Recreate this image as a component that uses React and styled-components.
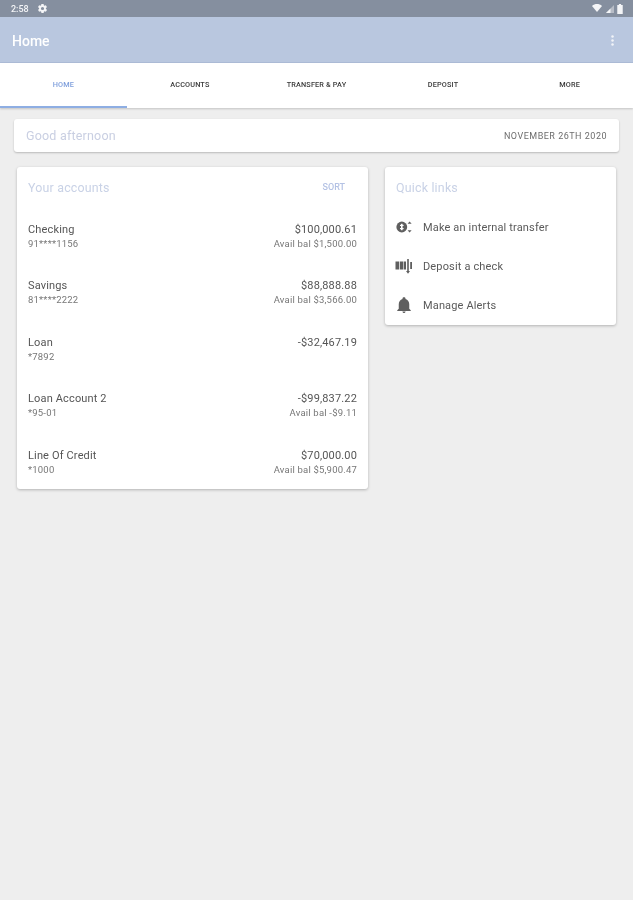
import React from "react";
import styled, { createGlobalStyle } from "styled-components";

const Global = createGlobalStyle`
  html, body { margin: 0; padding: 0; background: #eeeeee; }
  body { font-family: Roboto, "Liberation Sans", sans-serif; }
`;

const Page = styled.div`
  width: 633px;
  height: 900px;
  display: flex;
  flex-direction: column;
  background: #eeeeee;
  overflow: hidden;
  filter: blur(0.5px);
`;

const StatusBar = styled.div`
  height: 17px;
  flex: none;
  display: flex;
  align-items: center;
  justify-content: space-between;
  padding: 0 10px 0 11px;
  background: #858f9f;
  color: #f4f5f7;
  font-size: 9px;
  font-weight: 500;
`;

const StatusGroup = styled.div`
  display: flex;
  align-items: center;
  gap: ${(p) => p.$gap}px;
`;

const AppBar = styled.header`
  height: 46px;
  flex: none;
  display: flex;
  align-items: center;
  justify-content: space-between;
  padding: 2px 19px 0 12px;
  background: #b9c7df;
  color: #ffffff;
  font-size: 14px;
  font-weight: 500;
  border-bottom: 1px solid #aebdd8;
  box-sizing: border-box;
`;

const Tabs = styled.nav`
  height: 45px;
  flex: none;
  display: flex;
  background: #ffffff;
  box-shadow: 0 1px 2px rgba(0, 0, 0, 0.18);
`;

const Tab = styled.div`
  flex: 1;
  display: flex;
  align-items: center;
  justify-content: center;
  box-sizing: border-box;
  font-size: 7.3px;
  font-weight: 500;
  letter-spacing: 0.15px;
  color: ${(p) => (p.$active ? "#7f9fdc" : "#3a3a3a")};
  border-bottom: 2px solid ${(p) => (p.$active ? "#8eaee3" : "transparent")};
`;

const Content = styled.main`
  display: flex;
  flex-direction: column;
  gap: 15px;
  padding: 11px 14px 0;
`;

const GreetingCard = styled.section`
  height: 33px;
  display: flex;
  align-items: center;
  justify-content: space-between;
  padding: 0 12px;
  background: #ffffff;
  border-radius: 3px;
  box-shadow: 0 1px 2px rgba(0, 0, 0, 0.22);
`;

const Greeting = styled.div`
  font-size: 12.5px;
  color: #c9cfe2;
  letter-spacing: 0.2px;
`;

const DateText = styled.div`
  font-size: 9px;
  color: #6d6d6d;
  letter-spacing: 0.5px;
`;

const Columns = styled.div`
  display: flex;
  align-items: flex-start;
  gap: 17px;
  padding: 0 3px;
`;

const Card = styled.section`
  width: ${(p) => p.$width}px;
  flex: none;
  box-sizing: border-box;
  background: #ffffff;
  border-radius: 3px;
  box-shadow: 0 1px 3px rgba(0, 0, 0, 0.25);
`;

const CardHeader = styled.div`
  height: 40px;
  display: flex;
  align-items: center;
  justify-content: space-between;
  padding: 0 23px 0 11px;
`;

const CardTitle = styled.h2`
  margin: 0;
  font-size: 12.4px;
  font-weight: 400;
  letter-spacing: 0.2px;
  color: #c9d2e6;
`;

const SortButton = styled.div`
  font-size: 9px;
  font-weight: 500;
  color: #b4c2e4;
`;

const AccountList = styled.div`
  display: flex;
  flex-direction: column;
`;

const AccountRow = styled.div`
  height: 56.4px;
  box-sizing: border-box;
  padding: 16px 11px 0;
  display: flex;
  justify-content: space-between;
`;

const Side = styled.div`
  display: flex;
  flex-direction: column;
  align-items: ${(p) => (p.$end ? "flex-end" : "flex-start")};
`;

const Primary = styled.div`
  font-size: 11px;
  line-height: 14px;
  letter-spacing: 0.15px;
  color: #555555;
`;

const Secondary = styled.div`
  font-size: 9.5px;
  line-height: 14px;
  letter-spacing: 0.2px;
  color: #777777;
`;

const LinkList = styled.div`
  display: flex;
  flex-direction: column;
  padding-top: 0.6px;
`;

const LinkRow = styled.div`
  height: 39.1px;
  display: flex;
  align-items: center;
  gap: 10px;
  padding-left: 10px;
  font-size: 11px;
  letter-spacing: 0.15px;
  color: #5a5a5a;
`;

const IconBox = styled.svg`
  width: ${(p) => p.$size || 18}px;
  height: ${(p) => p.$size || 18}px;
  flex: none;
  fill: ${(p) => p.$color || "#5f5f5f"};
`;

const GearIcon = () => (
  <IconBox $color="#f4f5f7" $size={11} viewBox="0 0 24 24">
    <path d="M19.4 13c.04-.32.1-.66.1-1s-.06-.68-.1-1l2.1-1.65a.5.5 0 0 0 .12-.64l-2-3.46a.5.5 0 0 0-.6-.22l-2.5 1a7.3 7.3 0 0 0-1.7-1l-.38-2.65A.5.5 0 0 0 14 2h-4a.5.5 0 0 0-.5.42L9.1 5.07a7.7 7.7 0 0 0-1.7 1l-2.5-1a.5.5 0 0 0-.6.22l-2 3.46a.5.5 0 0 0 .12.64L4.6 11c-.04.32-.1.66-.1 1s.06.68.1 1l-2.1 1.65a.5.5 0 0 0-.12.64l2 3.46c.12.22.38.3.6.22l2.5-1c.52.4 1.08.74 1.7 1l.38 2.65c.04.24.25.42.5.42h4c.25 0 .46-.18.5-.42l.38-2.65a7.7 7.7 0 0 0 1.7-1l2.5 1c.22.08.48 0 .6-.22l2-3.46a.5.5 0 0 0-.12-.64L19.4 13zM12 15.5a3.5 3.5 0 1 1 0-7 3.5 3.5 0 0 1 0 7z" />
  </IconBox>
);

const WifiIcon = () => (
  <svg width="10" height="8.5" viewBox="0 0 12 10">
    <path d="M0 2.2C3.4-.7 8.6-.7 12 2.2L6 9.6z" fill="#f4f5f7" />
  </svg>
);

const SignalIcon = () => (
  <svg width="8" height="8" viewBox="0 0 8 8">
    <path d="M8 0v8H0z" fill="#f4f5f7" opacity="0.45" />
    <path d="M4.5 3.5V8H0z" fill="#f4f5f7" />
  </svg>
);

const BatteryIcon = () => (
  <svg width="6" height="10" viewBox="0 0 6 11">
    <path d="M1.8 0h2.4v1H6v10H0V1h1.8z" fill="#f4f5f7" />
  </svg>
);

const MoreIcon = () => (
  <svg width="3" height="11" viewBox="0 0 3 11">
    <circle cx="1.5" cy="1.5" r="1.25" fill="#f2f4f8" />
    <circle cx="1.5" cy="5.5" r="1.25" fill="#f2f4f8" />
    <circle cx="1.5" cy="9.5" r="1.25" fill="#f2f4f8" />
  </svg>
);

const TransferIcon = () => (
  <IconBox viewBox="0 0 18 18">
    <circle cx="6.8" cy="9" r="5.4" />
    <rect x="6" y="5.8" width="1.6" height="6.4" fill="#fff" />
    <rect x="5" y="6.8" width="3.6" height="1.2" fill="#fff" />
    <rect x="5" y="10" width="3.6" height="1.2" fill="#fff" />
    <path d="M14.6 3.4l2 2.4h-4z" />
    <path d="M14.6 14.6l2-2.4h-4z" />
  </IconBox>
);

const DepositIcon = () => (
  <IconBox viewBox="0 0 18 18">
    <rect x="0.5" y="4.5" width="3.6" height="8" />
    <rect x="4.8" y="4.5" width="3.6" height="8" />
    <rect x="9" y="4.5" width="2" height="8" />
    <rect x="12.2" y="2" width="1.6" height="12" />
    <path d="M13 16.8l-2-2.8h4z" />
    <rect x="15.2" y="5" width="1.8" height="7" />
  </IconBox>
);

const BellIcon = () => (
  <IconBox viewBox="0 0 24 24">
    <path d="M12 22.5c1.2 0 2.1-.9 2.1-2h-4.2c0 1.1.9 2 2.1 2zm7-5.5v-6c0-3.4-1.9-6.2-5-7V3.3C14 2.2 13.1 1.5 12 1.5s-2 .7-2 1.8V4c-3.1.8-5 3.6-5 7v6l-2 2v1h18v-1l-2-2z" />
  </IconBox>
);

const accounts = [
  { name: "Checking", id: "91****1156", amount: "$100,000.61", avail: "Avail bal $1,500.00" },
  { name: "Savings", id: "81****2222", amount: "$88,888.88", avail: "Avail bal $3,566.00" },
  { name: "Loan", id: "*7892", amount: "-$32,467.19" },
  { name: "Loan Account 2", id: "*95-01", amount: "-$99,837.22", avail: "Avail bal -$9.11" },
  { name: "Line Of Credit", id: "*1000", amount: "$70,000.00", avail: "Avail bal $5,900.47" },
];

const tabs = ["HOME", "ACCOUNTS", "TRANSFER & PAY", "DEPOSIT", "MORE"];

const links = [
  { label: "Make an internal transfer", Icon: TransferIcon },
  { label: "Deposit a check", Icon: DepositIcon },
  { label: "Manage Alerts", Icon: BellIcon },
];

export default function App() {
  return (
    <Page>
      <Global />
      <StatusBar>
        <StatusGroup $gap={8}>
          <span>2:58</span>
          <GearIcon />
        </StatusGroup>
        <StatusGroup $gap={3.5}>
          <WifiIcon />
          <SignalIcon />
          <BatteryIcon />
        </StatusGroup>
      </StatusBar>
      <AppBar>
        <span>Home</span>
        <MoreIcon />
      </AppBar>
      <Tabs>
        {tabs.map((t, i) => (
          <Tab key={t} $active={i === 0}>{t}</Tab>
        ))}
      </Tabs>
      <Content>
        <GreetingCard>
          <Greeting>Good afternoon</Greeting>
          <DateText>NOVEMBER 26TH 2020</DateText>
        </GreetingCard>
        <Columns>
          <Card $width={351}>
            <CardHeader>
              <CardTitle>Your accounts</CardTitle>
              <SortButton>SORT</SortButton>
            </CardHeader>
            <AccountList>
              {accounts.map((a) => (
                <AccountRow key={a.name}>
                  <Side>
                    <Primary>{a.name}</Primary>
                    <Secondary>{a.id}</Secondary>
                  </Side>
                  <Side $end>
                    <Primary>{a.amount}</Primary>
                    {a.avail && <Secondary>{a.avail}</Secondary>}
                  </Side>
                </AccountRow>
              ))}
            </AccountList>
          </Card>
          <Card $width={231}>
            <CardHeader>
              <CardTitle>Quick links</CardTitle>
            </CardHeader>
            <LinkList>
              {links.map(({ label, Icon }) => (
                <LinkRow key={label}>
                  <Icon />
                  <span>{label}</span>
                </LinkRow>
              ))}
            </LinkList>
          </Card>
        </Columns>
      </Content>
    </Page>
  );
}
